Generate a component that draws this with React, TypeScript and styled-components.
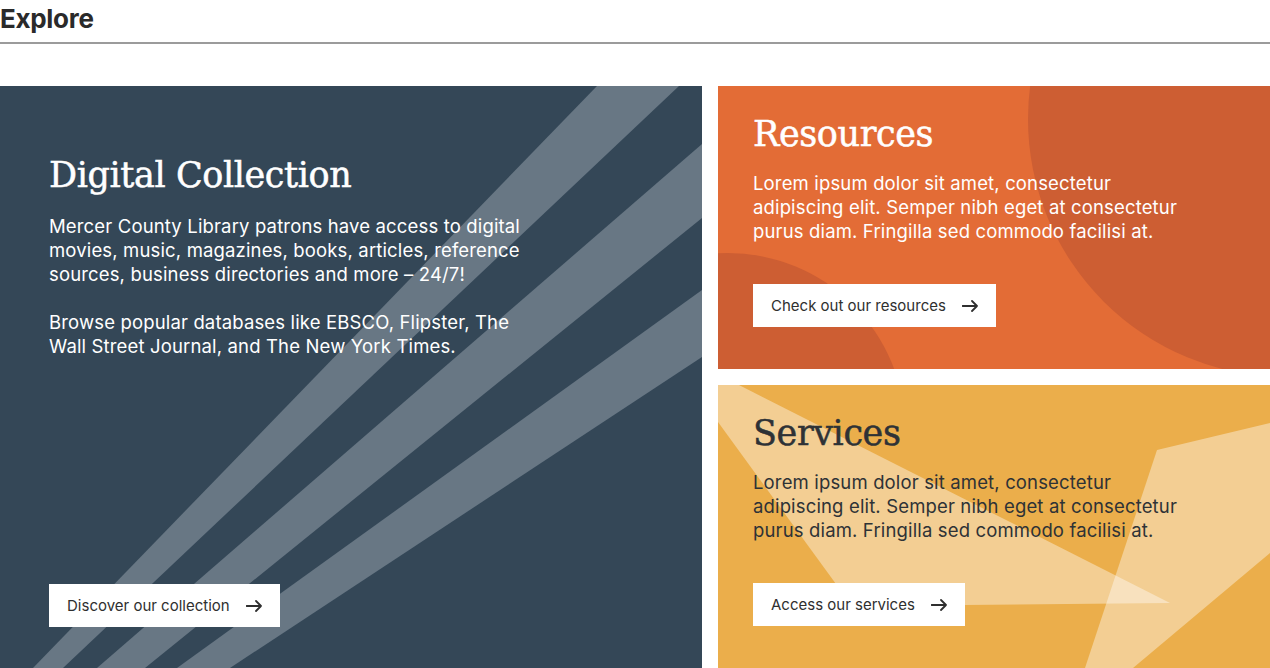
import React from "react";
import styled, { createGlobalStyle } from "styled-components";

const GlobalStyle = createGlobalStyle`
  html, body { margin: 0; padding: 0; background: #ffffff; }
  body { font-family: Inter, "Noto Sans", sans-serif; overflow: hidden; }
  * { box-sizing: border-box; }
`;

const Page = styled.div`
  width: 1270px;
`;

const Header = styled.header`
  padding: 3px 0 8px;
  border-bottom: 2px solid #9b9b9b;
`;

const PageTitle = styled.h2`
  margin: 0;
  font-family: Inter, sans-serif;
  font-weight: 700;
  font-size: 26px;
  line-height: 31px;
  letter-spacing: -0.3px;
  color: #2a2a2a;
`;

const Grid = styled.div`
  display: grid;
  grid-template-columns: 702px 552px;
  gap: 16px;
  margin-top: 42px;
`;

const Column = styled.div`
  display: flex;
  flex-direction: column;
  gap: 16px;
`;

type Tone = "navy" | "orange" | "gold";

const toneBg: Record<Tone, string> = {
  navy: "#344757",
  orange: "#e36c36",
  gold: "#ebae4b",
};

const toneInk: Record<Tone, string> = {
  navy: "#ffffff",
  orange: "#ffffff",
  gold: "#2e3236",
};

const Card = styled.section<{ $tone: Tone; $feature?: boolean }>`
  position: relative;
  overflow: hidden;
  display: flex;
  flex-direction: column;
  min-height: ${(p) => (p.$feature ? "582px" : "283px")};
  padding: ${(p) => (p.$feature ? "69px 49px 41px" : "28px 35px 42px")};
  background: ${(p) => toneBg[p.$tone]};
  color: ${(p) => toneInk[p.$tone]};
`;

const Decor = styled.svg`
  position: absolute;
  inset: 0;
  width: 100%;
  height: 100%;
  z-index: 0;
`;

const Content = styled.div`
  position: relative;
  z-index: 1;
  display: flex;
  flex-direction: column;
  flex: 1;
`;

const CardTitle = styled.h3<{ $feature?: boolean }>`
  margin: 0 0 ${(p) => (p.$feature ? "18px" : "16px")};
  font-family: "DejaVu Serif", "Liberation Serif", serif;
  font-weight: 400;
  font-size: 35px;
  line-height: 40.8px;
  letter-spacing: -0.4px;
  -webkit-text-stroke: 0.5px currentColor;
`;

const Body = styled.p<{ $wide?: boolean }>`
  margin: 0;
  max-width: ${(p) => (p.$wide ? "480px" : "440px")};
  font-family: Inter, sans-serif;
  font-size: 18.5px;
  line-height: 24px;
  letter-spacing: 0.15px;
  & + & { margin-top: 24px; }
`;

const CardButton = styled.a`
  margin-top: auto;
  align-self: flex-start;
  display: inline-flex;
  align-items: center;
  gap: 16px;
  height: 43px;
  padding: 0 18px;
  background: #ffffff;
  color: #2f2f2f;
  font-family: Inter, sans-serif;
  font-size: 15px;
  text-decoration: none;
  cursor: pointer;
`;

const Arrow = () => (
  <svg width="16" height="12" viewBox="0 0 16 12" fill="none">
    <path d="M0.5 6H15M10 1L15 6L10 11" stroke="#2f2f2f" strokeWidth="1.8" strokeLinecap="round" strokeLinejoin="round" />
  </svg>
);

export default function App() {
  return (
    <Page>
      <GlobalStyle />
      <Header>
        <PageTitle>Explore</PageTitle>
      </Header>
      <Grid>
        <Card $tone="navy" $feature>
          <Decor viewBox="0 0 702 582" preserveAspectRatio="none" aria-hidden>
            <g fill="#687784">
              <polygon points="597,0 679,0 63,582 33,582" />
              <polygon points="702,58 702,132 145,582 97,582" />
              <polygon points="702,204 702,271 230,582 177,582" />
            </g>
          </Decor>
          <Content>
            <CardTitle $feature>Digital Collection</CardTitle>
            <Body $wide>
              Mercer County Library patrons have access to digital movies, music, magazines, books, articles, reference sources, business directories and more – 24/7!
            </Body>
            <Body $wide>
              Browse popular databases like EBSCO, Flipster, The Wall Street Journal, and The New York Times.
            </Body>
            <CardButton>
              Discover our collection <Arrow />
            </CardButton>
          </Content>
        </Card>
        <Column>
          <Card $tone="orange">
            <Decor viewBox="0 0 552 283" preserveAspectRatio="none" aria-hidden>
              <g fill="#cd5e33">
                <circle cx="568" cy="33" r="258" />
                <circle cx="10" cy="344" r="177" />
              </g>
            </Decor>
            <Content>
              <CardTitle>Resources</CardTitle>
              <Body>
                Lorem ipsum dolor sit amet, consectetur adipiscing elit. Semper nibh eget at consectetur purus diam. Fringilla sed commodo facilisi at.
              </Body>
              <CardButton>
                Check out our resources <Arrow />
              </CardButton>
            </Content>
          </Card>
          <Card $tone="gold">
            <Decor viewBox="0 0 552 283" preserveAspectRatio="none" aria-hidden>
              <g fill="rgba(255,255,255,0.4)">
                <polygon points="0,0 21,0 452,218 134,221 0,37" />
                <polygon points="439,65 552,38 552,168 415,283 367,283" />
              </g>
            </Decor>
            <Content>
              <CardTitle>Services</CardTitle>
              <Body>
                Lorem ipsum dolor sit amet, consectetur adipiscing elit. Semper nibh eget at consectetur purus diam. Fringilla sed commodo facilisi at.
              </Body>
              <CardButton>
                Access our services <Arrow />
              </CardButton>
            </Content>
          </Card>
        </Column>
      </Grid>
    </Page>
  );
}
